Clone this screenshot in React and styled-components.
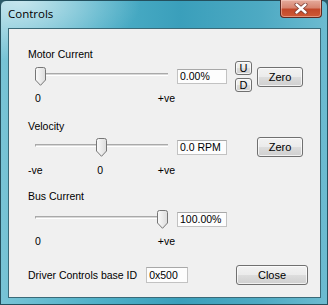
import styled, { createGlobalStyle } from "styled-components";

const GlobalStyle = createGlobalStyle`
  html, body {
    margin: 0;
    padding: 0;
    background: #2b5b69;
  }
  body {
    width: 328px;
    height: 305px;
    overflow: hidden;
    font-family: "Liberation Sans", Arial, sans-serif;
  }
`;

const Window = styled.div`
  box-sizing: border-box;
  width: 328px;
  height: 305px;
  display: flex;
  flex-direction: column;
  padding: 0 6px 6px 7px;
  border: 1px solid #24505e;
  border-radius: 6px 6px 0 0;
  background:
    radial-gradient(ellipse 120px 60px at 20px 0px, rgba(255, 255, 255, 0.6), rgba(255, 255, 255, 0) 100%),
    linear-gradient(90deg, #78c4d6 0%, #4fb0c8 30%, #3a9fbb 55%, #4eaac3 80%, #6cbbd0 100%);
`;

const TitleBar = styled.div`
  height: 27px;
  display: flex;
  align-items: flex-start;
  justify-content: space-between;
`;

const Title = styled.div`
  padding-top: 5px;
  font-family: "Open Sans", "Noto Sans", sans-serif;
  font-size: 11.5px;
  line-height: 16px;
  color: #000;
`;

const CloseButton = styled.div`
  box-sizing: border-box;
  width: 42px;
  height: 18px;
  margin-top: -1px;
  margin-right: -1px;
  display: flex;
  align-items: center;
  justify-content: center;
  border: 1px solid #5e2a22;
  border-top: none;
  border-radius: 0 0 4px 4px;
  box-shadow: inset 0 0 0 1px rgba(255, 220, 210, 0.45);
  background: linear-gradient(180deg, #e5ab9c 0%, #d78570 45%, #c2482a 55%, #cf5a36 100%);
`;

const Client = styled.div`
  flex: 1;
  box-sizing: border-box;
  display: flex;
  flex-direction: column;
  padding: 19px 12px 0 19px;
  border: 1px solid #3a6a78;
  background: #f0f0f0;
  font-size: 10.5px;
  color: #000;
`;

const Section = styled.section`
  margin-top: ${(p) => p.$gap || 0}px;
`;

const Label = styled.div`
  height: 13px;
  line-height: 13px;
  white-space: nowrap;
`;

const ControlRow = styled.div`
  display: grid;
  grid-template-columns: 149px 58px 22px 46px;
  align-items: center;
  height: ${(p) => p.$h}px;
`;

const SliderBox = styled.div`
  position: relative;
  height: 19px;
`;

const Track = styled.div`
  position: absolute;
  left: 7px;
  right: 9px;
  top: 6px;
  height: 1px;
  border-top: 1px solid #a9a9a9;
  border-left: 1px solid #a9a9a9;
  border-bottom: 1px solid #ffffff;
  background: #d8d8d8;
`;

const Thumb = styled.svg`
  position: absolute;
  top: 0;
  width: 11px;
  height: 19px;
`;

const TextBox = styled.div`
  box-sizing: border-box;
  width: ${(p) => p.$w || 50}px;
  height: ${(p) => p.$hgt || 15}px;
  padding-left: 2px;
  border: 1px solid #c2c2c2;
  border-top-color: #a8a8a8;
  background: #fdfdfd;
  line-height: ${(p) => (p.$hgt || 15) - 2}px;
  white-space: nowrap;
`;

const Button = styled.div`
  box-sizing: border-box;
  width: ${(p) => p.$w}px;
  height: ${(p) => p.$h}px;
  display: flex;
  align-items: center;
  justify-content: center;
  border: 1px solid #707070;
  border-radius: 3px;
  box-shadow: inset 0 0 0 1px rgba(255, 255, 255, 0.7);
  background: linear-gradient(180deg, #f2f2f2 0%, #ebebeb 50%, #dddddd 51%, #cfcfcf 100%);
  font-size: ${(p) => p.$fs || 11}px;
`;

const UpDown = styled.div`
  display: flex;
  flex-direction: column;
  gap: 3px;
`;

const Ticks = styled.div`
  box-sizing: border-box;
  width: 149px;
  height: 13px;
  margin-top: ${(p) => p.$mt || 0}px;
  padding: 0 2px 0 ${(p) => p.$pl}px;
  display: flex;
  justify-content: space-between;
  line-height: 13px;
`;

const BottomRow = styled.div`
  display: flex;
  align-items: center;
  height: 20px;
  margin-top: 17px;
`;

const BaseLabel = styled.div`
  margin-right: 9px;
  white-space: nowrap;
`;

const Spacer = styled.div`
  flex: 1;
`;

function Slider({ value }) {
  return (
    <SliderBox>
      <Track />
      <Thumb viewBox="0 0 11 19" style={{ left: 7 + value * 122 }}>
        <defs>
          <linearGradient id="thumbFill" x1="0" y1="0" x2="1" y2="0">
            <stop offset="0" stopColor="#fbfbfb" />
            <stop offset="1" stopColor="#dcdcdc" />
          </linearGradient>
        </defs>
        <path
          d="M0.5 2.5 Q0.5 0.5 2.5 0.5 H8.5 Q10.5 0.5 10.5 2.5 V13 L5.5 18.3 L0.5 13 Z"
          fill="url(#thumbFill)"
          stroke="#767676"
        />
      </Thumb>
    </SliderBox>
  );
}

function CloseGlyph() {
  return (
    <svg width="14" height="11" viewBox="0 0 14 11">
      <path d="M2.5 1.5 L11.5 9.5 M11.5 1.5 L2.5 9.5" stroke="#7a3a30" strokeWidth="4" strokeLinecap="round" />
      <path d="M2.5 1.5 L11.5 9.5 M11.5 1.5 L2.5 9.5" stroke="#ffffff" strokeWidth="2.4" strokeLinecap="round" />
    </svg>
  );
}

export default function App() {
  return (
    <>
      <GlobalStyle />
      <Window>
        <TitleBar>
          <Title>Controls</Title>
          <CloseButton>
            <CloseGlyph />
          </CloseButton>
        </TitleBar>
        <Client>
          <Section>
            <Label>Motor Current</Label>
            <ControlRow $h={31}>
              <Slider value={0} />
              <TextBox>0.00%</TextBox>
              <UpDown>
                <Button $w={17} $h={14} $fs={11}>U</Button>
                <Button $w={17} $h={14} $fs={11}>D</Button>
              </UpDown>
              <Button $w={46} $h={20}>Zero</Button>
            </ControlRow>
            <Ticks $pl={7}>
              <span>0</span>
              <span>+ve</span>
            </Ticks>
          </Section>

          <Section $gap={15}>
            <Label>Velocity</Label>
            <ControlRow $h={28}>
              <Slider value={0.5} />
              <TextBox>0.0 RPM</TextBox>
              <span />
              <Button $w={46} $h={20}>Zero</Button>
            </ControlRow>
            <Ticks $pl={0} $mt={3}>
              <span>-ve</span>
              <span>0</span>
              <span>+ve</span>
            </Ticks>
          </Section>

          <Section $gap={13}>
            <Label>Bus Current</Label>
            <ControlRow $h={32}>
              <Slider value={1} />
              <TextBox>100.00%</TextBox>
            </ControlRow>
            <Ticks $pl={7}>
              <span>0</span>
              <span>+ve</span>
            </Ticks>
          </Section>

          <BottomRow>
            <BaseLabel>Driver Controls base ID</BaseLabel>
            <TextBox $w={42} $hgt={16}>0x500</TextBox>
            <Spacer />
            <Button $w={72} $h={20}>Close</Button>
          </BottomRow>
        </Client>
      </Window>
    </>
  );
}
